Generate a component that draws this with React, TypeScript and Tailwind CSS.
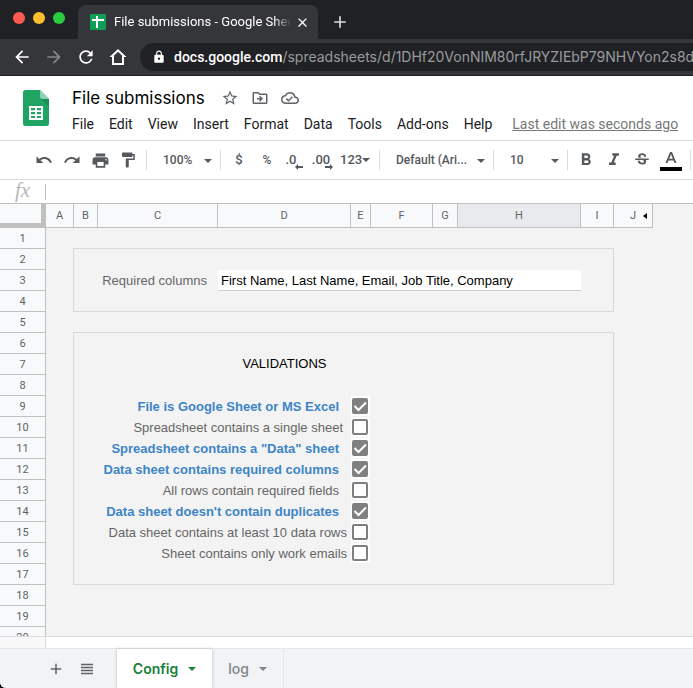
import { useState, type ReactNode } from "react";
import {
  MdAdd,
  MdArrowBack,
  MdArrowForward,
  MdClose,
  MdFormatBold,
  MdFormatItalic,
  MdLock,
  MdOutlineCloudDone,
  MdOutlineDriveFileMove,
  MdPrint,
  MdRedo,
  MdRefresh,
  MdStarBorder,
  MdStrikethroughS,
  MdUndo,
  MdViewHeadline,
} from "react-icons/md";

const COLUMNS = [
  { name: "A", width: 28 },
  { name: "B", width: 24 },
  { name: "C", width: 120 },
  { name: "D", width: 133 },
  { name: "E", width: 20 },
  { name: "F", width: 62 },
  { name: "G", width: 25 },
  { name: "H", width: 123 },
  { name: "I", width: 33 },
  { name: "J", width: 39 },
];

const MENUS = ["File", "Edit", "View", "Insert", "Format", "Data", "Tools", "Add-ons", "Help"];

type Rule = { label: string; pad: string; on: boolean };

const RULES: Record<number, Rule> = {
  9: { label: "File is Google Sheet or MS Excel", pad: "pr-3", on: true },
  10: { label: "Spreadsheet contains a single sheet", pad: "pr-2", on: false },
  11: { label: 'Spreadsheet contains a "Data" sheet', pad: "pr-3", on: true },
  12: { label: "Data sheet contains required columns", pad: "pr-3", on: true },
  13: { label: "All rows contain required fields", pad: "pr-3", on: false },
  14: { label: "Data sheet doesn't contain duplicates", pad: "pr-3", on: true },
  15: { label: "Data sheet contains at least 10 data rows", pad: "pr-1", on: false },
  16: { label: "Sheet contains only work emails", pad: "pr-1", on: false },
};

function Caret({ className = "" }: { className?: string }) {
  return (
    <svg viewBox="0 0 8 4" className={`pointer-events-none h-1 w-2 fill-current ${className}`} aria-hidden="true">
      <path d="M0 0h8L4 4z" />
    </svg>
  );
}

function Separator() {
  return <div className="mx-1 h-5 w-px shrink-0 bg-[#dadce0]" />;
}

function ToolButton({ label, children }: { label: string; children: ReactNode }) {
  return (
    <button aria-label={label} className="relative flex h-7 w-7 shrink-0 items-center justify-center">
      {children}
    </button>
  );
}

function ToolSelect({ label, value, className }: { label: string; value: string; className: string }) {
  return (
    <div className={`relative flex shrink-0 items-center ${className}`}>
      <select aria-label={label} className="w-full appearance-none bg-transparent pl-3 outline-none">
        <option>{value}</option>
      </select>
      <Caret className="absolute right-1 mt-0.5" />
    </div>
  );
}

function BrowserChrome() {
  return (
    <header className="shrink-0 bg-[#202124] text-white">
      <div className="flex h-[39px] items-end">
        <div className="flex h-[34px] w-[78px] items-center gap-2 pb-2 pl-[13px]">
          <button aria-label="Close window" className="h-3 w-3 rounded-full bg-[#ff5a52]" />
          <button aria-label="Minimize window" className="h-3 w-3 rounded-full bg-[#ffbe2e]" />
          <button aria-label="Zoom window" className="h-3 w-3 rounded-full bg-[#2aca41]" />
        </div>
        <div className="flex h-[34px] w-[240px] items-center rounded-t-lg bg-[#35363a] pl-3">
          <svg viewBox="0 0 16 16" className="h-4 w-4 shrink-0" aria-hidden="true">
            <rect width="16" height="16" rx="1" fill="#0f9d58" />
            <path d="M6 2h2v3h6v2H8v7H6V7H2V5h4z" fill="#fff" />
          </svg>
          <span className="ml-2 w-[177px] overflow-hidden whitespace-nowrap mask-r-from-90% text-[13px]">
            File submissions - Google Sheets
          </span>
          <button aria-label="Close tab" className="ml-1">
            <MdClose size={15} />
          </button>
        </div>
        <button aria-label="New tab" className="ml-3 flex h-[34px] items-center text-[#dadce0]">
          <MdAdd size={20} />
        </button>
      </div>
      <div className="flex h-[37px] items-center overflow-hidden border-b border-[#202124] bg-[#35363a]">
        <div className="flex shrink-0 items-center gap-3 pl-3">
          <button aria-label="Back"><MdArrowBack size={20} /></button>
          <button aria-label="Forward" className="text-[#87888b]"><MdArrowForward size={20} /></button>
          <button aria-label="Reload"><MdRefresh size={20} /></button>
          <button aria-label="Home">
            <svg viewBox="0 0 20 20" className="h-5 w-5" fill="currentColor" fillRule="evenodd" aria-hidden="true">
              <path d="M10 2l8.500 8H16v8H4v-8H1.500zM10 4.700L6 8.500V16h8V8.500z" />
            </svg>
          </button>
        </div>
        <div className="ml-3 flex h-7 flex-1 items-center gap-2 overflow-hidden rounded-l-full bg-[#202124] pl-3">
          <MdLock size={14} className="shrink-0" />
          <div className="whitespace-nowrap text-[14px] text-[#9a9b9e]">
            <span className="font-medium text-white">docs.google.com</span>
            <span className="font-[Inter,sans-serif]">/spreadsheets/d/1DHf20VonNIM80rfJRYZIEbP79NHVYon2s8d</span>
          </div>
        </div>
      </div>
    </header>
  );
}

function SheetsLogo() {
  return (
    <svg viewBox="0 0 26 36" className="mt-[14px] ml-[23px] h-9 w-[26px] shrink-0" aria-label="Sheets">
      <path d="M2.500 0H17l9 9v24.500a2.500 2.500 0 0 1-2.500 2.500h-21A2.500 2.500 0 0 1 0 33.500v-31A2.500 2.500 0 0 1 2.500 0z" fill="#1fa463" />
      <path d="M17 0l9 9h-6.500A2.500 2.500 0 0 1 17 6.500z" fill="#8ed1b1" />
      <path d="M17.800 8.500L26 17V9h-6.500z" fill="#188f54" />
      <path fillRule="evenodd" fill="#fff" d="M6 16h14v14H6zm2 2v2.200h4V18zm6 0v2.200h4V18zm-6 4v2.200h4V22zm6 0v2.200h4V22zm-6 4v2h4v-2zm6 0v2h4v-2z" />
    </svg>
  );
}

function DocumentHeader() {
  return (
    <div className="flex h-16 shrink-0 bg-white">
      <SheetsLogo />
      <div className="min-w-0 pl-4">
        <div className="flex h-9 items-center gap-3 pt-2 pl-[7px] text-[#5f6368]">
          <input
            aria-label="Document name"
            defaultValue="File submissions"
            className="w-[134px] font-[Inter,sans-serif] text-[17px] leading-6 text-black outline-none"
          />
          <button aria-label="Star" className="ml-[3px]"><MdStarBorder size={18} /></button>
          <button aria-label="Move"><MdOutlineDriveFileMove size={18} /></button>
          <button aria-label="Document status"><MdOutlineCloudDone size={18} /></button>
        </div>
        <nav className="flex items-center gap-px whitespace-nowrap text-[14px] leading-6 text-[#202124]">
          {MENUS.map((m) => (
            <button key={m} className="px-[7px]">{m}</button>
          ))}
          <a href="#history" className="ml-3 text-[#777] underline">
            Last edit was seconds ago
          </a>
        </nav>
      </div>
    </div>
  );
}

function Toolbar() {
  return (
    <div className="flex h-10 shrink-0 items-center overflow-hidden border-y border-[#dadce0] bg-white pl-[30px] text-[12px] font-medium text-[#55585c]">
      <ToolButton label="Undo"><MdUndo size={18} /></ToolButton>
      <ToolButton label="Redo"><MdRedo size={18} /></ToolButton>
      <ToolButton label="Print"><MdPrint size={19} /></ToolButton>
      <ToolButton label="Paint format">
        <svg viewBox="0 0 24 24" className="h-[18px] w-[18px] fill-current" aria-hidden="true">
          <path d="M18 4V3c0-.55-.45-1-1-1H5c-.55 0-1 .45-1 1v4c0 .55.45 1 1 1h12c.55 0 1-.45 1-1V6h1v4H9v11c0 .55.45 1 1 1h2c.55 0 1-.45 1-1v-9h8V4h-3z" />
        </svg>
      </ToolButton>
      <Separator />
      <ToolSelect label="Zoom" value="100%" className="w-[65px]" />
      <Separator />
      <ToolButton label="Format as currency"><span className="text-[13px]">$</span></ToolButton>
      <ToolButton label="Format as percent">%</ToolButton>
      <ToolButton label="Decrease decimal places">
        <span className="pr-2 text-[13px]">.0</span>
        <svg viewBox="0 0 8 6" className="absolute right-1.5 bottom-1 h-1.5 w-2 fill-current" aria-hidden="true">
          <path d="M3 0v2h5v2H3v2L0 3z" />
        </svg>
      </ToolButton>
      <ToolButton label="Increase decimal places">
        <span className="pr-1 text-[13px]">.00</span>
        <svg viewBox="0 0 8 6" className="absolute right-1 bottom-1 h-1.5 w-2 fill-current" aria-hidden="true">
          <path d="M5 0v2H0v2h5v2l3-3z" />
        </svg>
      </ToolButton>
      <button aria-label="More formats" className="flex w-[38px] shrink-0 items-center pl-[3px]">
        <span className="text-[13px]">123</span>
        <Caret />
      </button>
      <Separator />
      <ToolSelect label="Font" value="Default (Ari..." className="w-[105px]" />
      <Separator />
      <ToolSelect label="Font size" value="10" className="w-[65px]" />
      <Separator />
      <ToolButton label="Bold"><MdFormatBold size={20} /></ToolButton>
      <ToolButton label="Italic"><MdFormatItalic size={20} /></ToolButton>
      <ToolButton label="Strikethrough"><MdStrikethroughS size={18} /></ToolButton>
      <button aria-label="Text color" className="flex h-7 w-[30px] shrink-0 items-center justify-center">
        <svg viewBox="0 0 22 22" className="h-[22px] w-[22px]" aria-hidden="true">
          <path fill="currentColor" fillRule="evenodd" d="M10 3h2l4.500 11h-2l-1-2.600h-5L7.500 14h-2zm1 2.300L9.200 9.800h3.600z" />
          <path fill="#000" d="M0 18h22v4H0z" />
        </svg>
      </button>
      <Separator />
    </div>
  );
}

function FormulaBar() {
  return (
    <div className="flex h-6 shrink-0 items-center border-b border-[#c0c0c0] bg-white">
      <label
        htmlFor="formula"
        className="w-[45px] pb-1 text-center font-['Liberation_Serif',serif] text-[21px] leading-5 text-[#b7b7b7] italic"
      >
        fx
      </label>
      <input
        id="formula"
        className="h-4 min-w-0 flex-1 border-l border-[#c0c0c0] px-1 text-[13px] outline-none"
      />
    </div>
  );
}

function CheckCell({ rule, id, on, toggle }: { rule: Rule; id: string; on: boolean; toggle: () => void }) {
  return (
    <>
      <td colSpan={2} className={`text-right whitespace-nowrap ${rule.pad}`}>
        <label htmlFor={id} className={on ? "font-bold text-[#3d85c6]" : "text-[#666]"}>
          {rule.label}
        </label>
      </td>
      <td>
        <div className="relative mb-px flex h-5 w-[19px] items-center bg-white pl-px">
          <input
            id={id}
            type="checkbox"
            checked={on}
            onChange={toggle}
            className="peer h-4 w-4 appearance-none rounded-xs border-2 border-[#808080] bg-white checked:bg-[#808080]"
          />
          <svg
            viewBox="0 0 16 16"
            className="pointer-events-none absolute hidden h-4 w-4 peer-checked:block"
            fill="none"
            stroke="#fff"
            strokeWidth="2"
            aria-hidden="true"
          >
            <path d="M2.500 8l4 4L14 4.500" />
          </svg>
        </div>
      </td>
      <td colSpan={4} />
    </>
  );
}

function rowContent(row: number, checks: Record<number, boolean>, toggle: (row: number) => void) {
  if (row === 3) {
    return (
      <>
        <td className="pr-[11px] text-right whitespace-nowrap text-[#666]">
          <label htmlFor="required-columns">Required columns</label>
        </td>
        <td colSpan={5}>
          <input
            id="required-columns"
            defaultValue="First Name, Last Name, Email, Job Title, Company"
            className="block h-[21px] w-full rounded-t-xs border-b border-[#d0d0d0] bg-white px-[3px] text-black outline-none"
          />
        </td>
        <td />
      </>
    );
  }
  if (row === 7) {
    return (
      <>
        <td />
        <td className="text-center text-black">VALIDATIONS</td>
        <td colSpan={5} />
      </>
    );
  }
  if (RULES[row]) {
    return <CheckCell rule={RULES[row]} id={`rule-${row}`} on={checks[row]} toggle={() => toggle(row)} />;
  }
  return <td colSpan={7} />;
}

function boxEdges(row: number) {
  const inside = (row >= 2 && row <= 4) || (row >= 6 && row <= 17);
  return inside ? "border-[#d9d9d9] border-x" : "";
}

function Grid() {
  const [checks, setChecks] = useState<Record<number, boolean>>(() =>
    Object.fromEntries(Object.entries(RULES).map(([k, r]) => [k, r.on])),
  );
  const toggle = (row: number) => setChecks((c) => ({ ...c, [row]: !c[row] }));

  return (
    <main className="min-h-0 flex-1 overflow-hidden bg-[#f3f3f3]">
      <table className="w-[653px] table-fixed border-separate border-spacing-0 font-['Liberation_Sans',Arial,sans-serif] text-[13px] leading-5">
        <colgroup>
          <col className="w-[46px]" />
          {COLUMNS.map((c) => (
            <col key={c.name} style={{ width: c.width }} />
          ))}
        </colgroup>
        <thead className="font-[Roboto,sans-serif] text-[11px] text-[#5f6368]">
          <tr className="h-6">
            <td className="border-r-[5px] border-b-[5px] border-[#c0c0c0] bg-[#f8f9fa]" />
            {COLUMNS.map((c) => (
              <th
                key={c.name}
                scope="col"
                className={`border-r border-b border-[#c0c0c0] p-0 font-normal ${c.name === "H" ? "bg-[#e8eaed]" : "bg-[#f8f9fa]"}`}
              >
                {c.name === "J" ? (
                  <span className="flex items-center justify-center gap-[7px] pl-[11px]">
                    J
                    <svg viewBox="0 0 4 6" className="h-1.5 w-1" aria-hidden="true">
                      <path d="M4 0v6L0 3z" fill="#000" />
                    </svg>
                  </span>
                ) : (
                  c.name
                )}
              </th>
            ))}
          </tr>
        </thead>
        <tbody>
          {Array.from({ length: 20 }, (_, i) => i + 1).map((row) => (
            <tr key={row} className="h-[21px]">
              <th
                scope="row"
                className="border-r border-b border-[#c0c0c0] bg-[#f8f9fa] p-0 pt-0.5 font-[Roboto,sans-serif] text-[11px] leading-[18px] font-normal text-[#5f6368]"
              >
                {row}
              </th>
              <td />
              <BoxRow row={row}>{rowContent(row, checks, toggle)}</BoxRow>
            </tr>
          ))}
        </tbody>
      </table>
    </main>
  );
}

/* One band of the bordered panels, spanning columns B to I. */
function BoxRow({ row, children }: { row: number; children: ReactNode }) {
  const top = row === 1 || row === 5;
  const bottom = row === 4 || row === 17;
  return (
    <td colSpan={8} className="p-0">
      <div
        className={`-ml-px h-[21px] border-[#d9d9d9] ${boxEdges(row)} ${top || bottom ? "border-b" : ""}`}
      >
        <table className="w-full table-fixed border-separate border-spacing-0">
          <colgroup>
            {COLUMNS.slice(1, 9).map((c) => (
              <col key={c.name} style={{ width: c.width }} />
            ))}
          </colgroup>
          <tbody>
            <tr className="h-5">
              <td />
              {children}
            </tr>
          </tbody>
        </table>
      </div>
    </td>
  );
}

function SheetTabs() {
  return (
    <footer className="shrink-0">
      <div className="flex h-3 border-t border-[#dadce0] bg-white">
        <div className="w-[46px] border-r border-[#dadce0] bg-[#f8f8f8]" />
      </div>
      <div className="flex h-10 items-stretch border-t border-[#e4e6e9] bg-[#f1f3f4] font-[Inter,sans-serif] text-[14px] text-[#5f6368]">
        <div className="flex w-[117px] items-center gap-[13px] pl-[47px]">
          <button aria-label="Add sheet"><MdAdd size={18} /></button>
          <button aria-label="All sheets"><MdViewHeadline size={18} /></button>
        </div>
        <button className="flex w-[95px] items-center justify-center gap-2.5 bg-white font-semibold text-[#188038] shadow-[0_0_3px_rgba(60,64,67,0.3)]">
          Config
          <Caret />
        </button>
        <button className="flex w-[72px] items-center justify-center gap-2.5 border-r border-[#e4e6e9] font-medium text-[#80868b]">
          log
          <Caret />
        </button>
      </div>
    </footer>
  );
}

export default function App() {
  return (
    <div className="h-screen bg-black">
      <div className="flex h-full flex-col overflow-hidden rounded-bl-md bg-white font-[Roboto,sans-serif]">
        <BrowserChrome />
        <DocumentHeader />
        <Toolbar />
        <FormulaBar />
        <Grid />
        <SheetTabs />
      </div>
    </div>
  );
}
